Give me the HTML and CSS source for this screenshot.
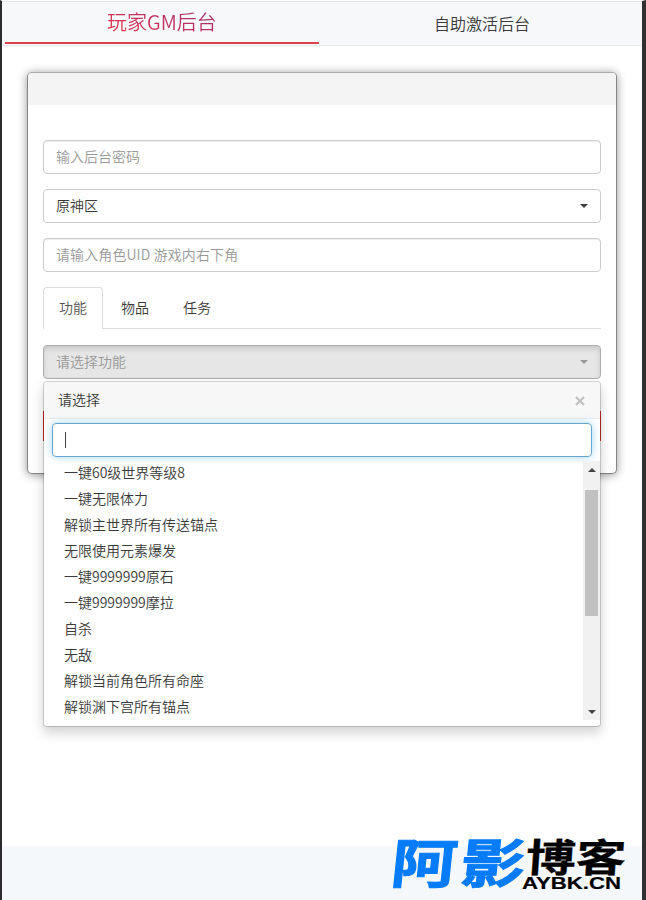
FILE: index.html
```html
<!DOCTYPE html>
<html lang="zh-CN">
<head>
<meta charset="utf-8">
<title>玩家GM后台</title>
<link rel="stylesheet" href="styles.css">
</head>
<body>
<div class="page">
  <nav class="topnav">
    <a class="topnav-item active"><span>玩家GM后台</span></a>
    <a class="topnav-item"><span>自助激活后台</span></a>
  </nav>
  <main class="main">
    <section class="card">
      <div class="card-head"></div>
      <div class="card-body">
        <div class="control placeholder"><span>输入后台密码</span></div>
        <div class="control"><span>原神区</span><i class="caret"></i></div>
        <div class="control placeholder"><span class="wide">请输入角色UID 游戏内右下角</span></div>
        <div class="tabs">
          <a class="tab active"><span>功能</span></a>
          <a class="tab"><span>物品</span></a>
          <a class="tab"><span>任务</span></a>
        </div>
        <div class="select">
          <div class="control pressed"><span>请选择功能</span><i class="caret"></i></div>
          <div class="menu">
            <div class="menu-head"><span>请选择</span>
              <svg class="close" viewBox="0 0 10 10"><path d="M1 1L9 9M9 1L1 9"/></svg>
            </div>
            <div class="search"><i class="cursor"></i></div>
            <div class="menu-body">
              <ul class="options">
                <li>一键60级世界等级8</li>
                <li>一键无限体力</li>
                <li>解锁主世界所有传送锚点</li>
                <li>无限使用元素爆发</li>
                <li>一键9999999原石</li>
                <li>一键9999999摩拉</li>
                <li>自杀</li>
                <li>无敌</li>
                <li>解锁当前角色所有命座</li>
                <li>解锁渊下宫所有锚点</li>
              </ul>
              <div class="scrollbar"><i class="arrow up"></i><i class="thumb"></i><i class="arrow down"></i></div>
            </div>
          </div>
        </div>
        <div class="submit"></div>
      </div>
    </section>
  </main>
  <footer class="footer">
    <svg class="logo" viewBox="0 0 240 60">
      <g class="logo-blue">
        <text transform="translate(2.5 49) skewX(-6) scale(1.24 1)">阿</text>
        <text transform="translate(72 49) skewX(-6) scale(1.22 1)">影</text>
      </g>
      <text class="logo-black" transform="translate(138 37.5) skewX(-4)" textLength="100" lengthAdjust="spacingAndGlyphs">博客</text>
      <text class="logo-url" x="135" y="55" textLength="99" lengthAdjust="spacingAndGlyphs">AYBK.CN</text>
    </svg>
  </footer>
</div>
</body>
</html>
```
FILE: styles.css
```css
* { box-sizing: border-box; }
body {
  margin: 0;
  background: #fff;
  font: 350 14px/20px "Noto Sans CJK SC", sans-serif;
  color: #3a3a3a;
}
.page {
  display: flex;
  flex-direction: column;
  height: 900px;
  border-left: 2px solid #2b2b2d;
  border-right: 4px solid #303033;
  border-top: 1px solid #fff;
  overflow: hidden;
}
.topnav {
  display: flex;
  flex: none;
  height: 45px;
  padding: 0 3px;
  background: #f6f8fa;
  border-top: 1px solid #e1e3e5;
  border-bottom: 1px solid #e9ecef;
}
.topnav-item {
  width: 314px;
  height: 42px;
  display: flex;
  justify-content: center;
  align-items: center;
  font-size: 16px;
  padding-left: 12px;
}
.topnav-item.active {
  font-size: 20px;
  padding: 0;
  border-bottom: 2px solid #d9434b;
}
.topnav-item.active span {
  background: linear-gradient(20deg, #e43145, #a23279);
  background-clip: text;
  -webkit-background-clip: text;
  color: transparent;
}
.main { flex: none; height: 800px; padding: 26px 25px 0; }
.card {
  height: 402px;
  border: 1px solid #858585;
  border-top-color: #aaa;
  border-radius: 5px;
  background: #fff;
  box-shadow: 0 1px 10px rgba(0,0,0,.42);
}
.card-head { height: 32px; margin-bottom: 1px; background: #f4f4f4; border-radius: 4px 4px 0 0; }
.card-body { padding: 34px 15px 0; }
.control {
  display: flex;
  align-items: center;
  justify-content: space-between;
  height: 34px;
  margin-bottom: 15px;
  padding: 0 12px;
  border: 1px solid #ccc;
  border-radius: 4px;
}
.control span, .tab span { margin-top: -2px; }
.control .wide { letter-spacing: .1px; }
.placeholder { color: #999; box-shadow: inset 0 1px 1px rgba(0,0,0,.075); }
.caret {
  border: 4px solid transparent;
  border-top-color: currentColor;
  border-bottom: 0;
}
.tabs { display: flex; height: 42px; border-bottom: 1px solid #ddd; margin-bottom: 16px; }
.tab {
  width: 60px;
  height: 42px;
  margin-right: 2px;
  display: flex;
  justify-content: center;
  align-items: center;
}
.tab.active { background: #fff; border: 1px solid #ddd; border-bottom: 0; border-radius: 4px 4px 0 0; color: #555; }
.tab.active span { margin-top: -3px; }
.select { position: relative; }
.pressed {
  background: #e6e6e6;
  border-color: #adadad;
  color: #999;
  box-shadow: inset 0 3px 5px rgba(0,0,0,.125);
}
.submit { height: 30px; margin-top: 32px; background: #d9302c; }
.menu {
  position: absolute;
  top: 36px;
  left: 0;
  width: 558px;
  height: 346px;
  background: #fff;
  background-clip: padding-box;
  border: 1px solid rgba(0,0,0,.17);
  border-radius: 4px;
  box-shadow: 0 6px 12px rgba(0,0,0,.175);
}
.menu-head {
  display: flex;
  align-items: center;
  justify-content: space-between;
  height: 37px;
  padding: 0 15px 0 14px;
  background: #f7f7f7;
  border-bottom: 1px solid #ebebeb;
  border-radius: 4px 4px 0 0;
}
.menu-head span { margin-top: -2px; }
.close { width: 10px; height: 10px; margin-top: 1px; stroke: #c1c1c1; stroke-width: 2.2; fill: none; }
.search {
  display: flex;
  align-items: center;
  height: 34px;
  margin: 4px 8px;
  padding-left: 12px;
  border: 1px solid #66a5d2;
  border-radius: 4px;
  box-shadow: 0 0 8px rgba(102,190,233,.6);
}
.cursor { width: 1px; height: 16px; background: #444; }
.menu-body { display: flex; height: 259px; }
.options { flex: 1; list-style: none; margin: 0; padding: 0 0 0 20px; overflow: hidden; }
.options li { height: 26px; line-height: 22px; }
.scrollbar {
  display: flex;
  flex-direction: column;
  align-items: center;
  width: 17px;
  background: #f1f1f1;
}
.thumb { width: 13px; height: 126px; background: #c1c1c1; margin-top: 18px; }
.arrow { border: 4px solid transparent; }
.arrow.up { border-top: 0; border-bottom-color: #444; margin-top: 7px; }
.arrow.down { border-bottom: 0; border-top-color: #444; margin-top: 94px; }
.footer {
  flex: none;
  display: flex;
  justify-content: flex-end;
  height: 54px;
  padding-right: 15px;
  background: #f5f8fa;
}
.logo { flex: none; width: 240px; height: 60px; margin-top: -12px; overflow: visible; font-weight: 700; }
.logo-blue { fill: #087cf8; stroke: #087cf8; stroke-width: 1; font-size: 53px; }
.logo-black { fill: #000; stroke: #000; stroke-width: .3; font-size: 39px; }
.logo-url { font: bold 17px "Liberation Sans", sans-serif; stroke: #000; stroke-width: .2; }
```
